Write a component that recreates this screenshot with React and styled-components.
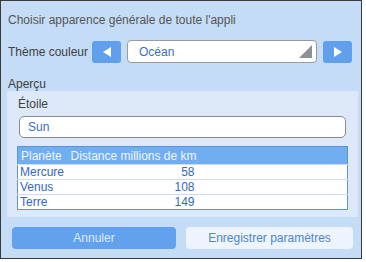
import React from "react";
import styled, { createGlobalStyle } from "styled-components";

const Global = createGlobalStyle`
  html, body { margin: 0; padding: 0; background: #ffffff; }
  body { font-family: "Liberation Sans", Arial, sans-serif; }
  * { box-sizing: border-box; }
`;

const Frame = styled.div`
  width: 362px;
  height: 259px;
  border: 1px solid #3a3a3a;
  background: #c5dcf6;
  padding: 11px 0 0 0;
  display: flex;
  flex-direction: column;
  color: #4a4a4a;
`;

const Title = styled.div`
  font-size: 12px;
  line-height: 16px;
  padding-left: 7px;
  color: #555555;
`;

const ThemeRow = styled.div`
  margin-top: 12px;
  height: 23px;
  display: flex;
  align-items: center;
  padding-left: 7px;
`;

const Label = styled.div`
  font-size: 12px;
  color: #404040;
  width: 84px;
  white-space: nowrap;
`;

const ArrowButton = styled.button`
  width: 29px;
  height: 22px;
  border: none;
  border-radius: 3px;
  background: #5f9fec;
  padding: 0;
  display: flex;
  align-items: center;
  justify-content: center;
  margin-left: ${(p) => p.$ml}px;
`;

const Select = styled.div`
  margin-left: 6px;
  width: 190px;
  height: 23px;
  background: #ffffff;
  border: 1px solid #9a9a9a;
  border-radius: 4px;
  position: relative;
  display: flex;
  align-items: center;
  padding-left: 11px;
  font-size: 12px;
  color: #3a6fc4;
`;

const Corner = styled.svg`
  position: absolute;
  right: 4px;
  bottom: 4px;
`;

const SectionLabel = styled.div`
  margin-top: 14px;
  font-size: 12px;
  line-height: 14px;
  padding-left: 7px;
  color: #404040;
`;

const Panel = styled.div`
  margin: 0 3px 0 6px;
  height: 126px;
  background: #dde9f9;
  padding: 5px 9px 0 10px;
  display: flex;
  flex-direction: column;
`;

const FieldLabel = styled.div`
  font-size: 12px;
  line-height: 16px;
  padding-left: 1px;
  color: #404040;
`;

const Input = styled.div`
  margin: 4px 3px 0 2px;
  height: 22px;
  background: #ffffff;
  border: 1px solid #8a8a8a;
  border-radius: 5px;
  display: flex;
  align-items: center;
  padding-left: 8px;
  font-size: 12px;
  color: #3a6fc4;
`;

const Table = styled.table`
  margin-top: 8px;
  width: 331px;
  border-collapse: collapse;
  border: 1px solid #5e93da;
  background: #ffffff;
  font-size: 12px;
  table-layout: fixed;
`;

const HeadCell = styled.th`
  background: #70adf1;
  color: #f2f7fd;
  font-weight: normal;
  text-align: left;
  height: 18px;
  padding: 0 0 0 3px;
  white-space: nowrap;
`;

const Cell = styled.td`
  color: #3468c2;
  height: 15px;
  line-height: 14px;
  padding: 0 ${(p) => (p.$num ? "2px" : "0")} 0 ${(p) => (p.$num ? "0" : "2px")};
  text-align: ${(p) => (p.$num ? "right" : "left")};
  border-top: 1px solid #cfdcee;
`;

const Footer = styled.div`
  margin-top: 10px;
  display: flex;
  padding-left: 11px;
  gap: 10px;
`;

const FootButton = styled.button`
  width: ${(p) => p.$w}px;
  height: 22px;
  border: none;
  border-radius: 4px;
  font-family: "Liberation Sans", Arial, sans-serif;
  font-size: 12px;
  background: ${(p) => (p.$primary ? "#62a1ee" : "#edf4fd")};
  color: ${(p) => (p.$primary ? "#dcebfc" : "#4f84d0")};
`;

const Tri = ({ dir }) => (
  <svg width="8" height="10" viewBox="0 0 8 10">
    {dir === "left" ? (
      <polygon points="8,0 8,10 0,5" fill="#ffffff" />
    ) : (
      <polygon points="0,0 0,10 8,5" fill="#ffffff" />
    )}
  </svg>
);

const rows = [
  ["Mercure", 58],
  ["Venus", 108],
  ["Terre", 149],
];

export default function App() {
  return (
    <>
      <Global />
      <Frame>
        <Title>Choisir apparence générale de toute l'appli</Title>
        <ThemeRow>
          <Label>Thème couleur</Label>
          <ArrowButton $ml={0}>
            <Tri dir="left" />
          </ArrowButton>
          <Select>
            Océan
            <Corner width="13" height="13" viewBox="0 0 13 13">
              <polygon points="13,0 13,13 0,13" fill="#8c9296" />
            </Corner>
          </Select>
          <ArrowButton $ml={6}>
            <Tri dir="right" />
          </ArrowButton>
        </ThemeRow>
        <SectionLabel>Aperçu</SectionLabel>
        <Panel>
          <FieldLabel>Étoile</FieldLabel>
          <Input>Sun</Input>
          <Table>
            <colgroup>
              <col style={{ width: "50px" }} />
              <col style={{ width: "129px" }} />
              <col />
            </colgroup>
            <thead>
              <tr>
                <HeadCell>Planète</HeadCell>
                <HeadCell>Distance millions de km</HeadCell>
                <HeadCell />
              </tr>
            </thead>
            <tbody>
              {rows.map(([n, d]) => (
                <tr key={n}>
                  <Cell>{n}</Cell>
                  <Cell $num>{d}</Cell>
                  <Cell />
                </tr>
              ))}
            </tbody>
          </Table>
        </Panel>
        <Footer>
          <FootButton $primary $w={164}>Annuler</FootButton>
          <FootButton $w={167}>Enregistrer paramètres</FootButton>
        </Footer>
      </Frame>
    </>
  );
}
